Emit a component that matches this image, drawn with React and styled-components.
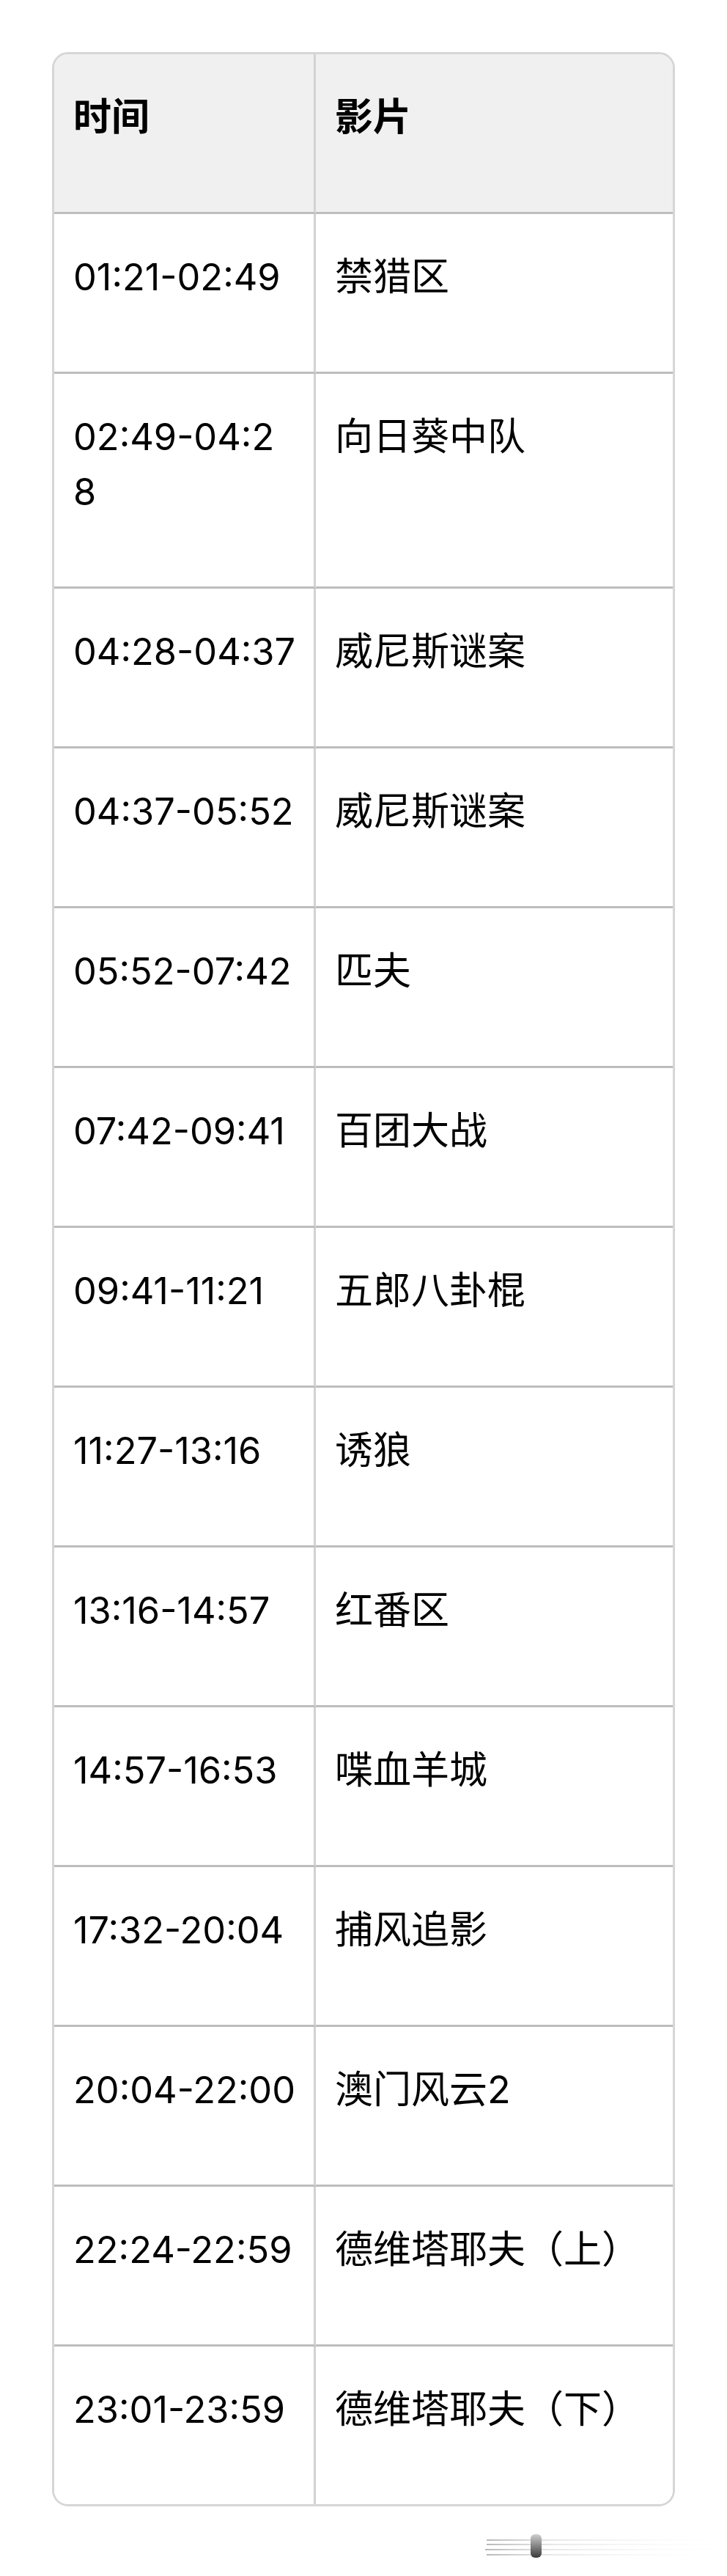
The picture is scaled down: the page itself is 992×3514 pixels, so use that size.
import React from 'react'
import styled, { createGlobalStyle } from 'styled-components'

const GlobalStyle = createGlobalStyle`
    html, body {
        margin: 0;
        padding: 0;
        background: #ffffff;
    }
    body {
        font-family: Inter, "Noto Sans CJK SC", sans-serif;
        color: #000;
    }
`

const Page = styled.div`
    min-height: 3514px;
    padding: 71px 0 0 71px;
    box-sizing: border-box;
`

const Table = styled.div`
    width: 850px;
    box-sizing: border-box;
    display: grid;
    grid-template-columns: 357px 1fr;
    border: 3px solid #d6d6d6;
    border-radius: 22px;
    overflow: hidden;
`

const Cell = styled.div`
    box-sizing: border-box;
    padding: 48px 20px 92px 26px;
    font-size: ${props => props.$first && !props.$head ? '50.5px' : '52px'};
    line-height: 75px;
    font-weight: ${props => props.$head ? 700 : 400};
    background: ${props => props.$head ? '#f0f0f0' : '#fff'};
    border-right: ${props => props.$first ? '3px solid #d2d2d2' : 'none'};
    border-bottom: ${props => props.$last ? 'none' : '3px solid #bdbdbd'};
    white-space: nowrap;
`

const Footer = styled.div`
    display: flex;
    justify-content: flex-end;
    padding: 36px 0 0 0;
`

const ScrollMark = styled.svg`
    width: 332px;
    height: 40px;
`

const rows = [
    ['01:21-02:49', '禁猎区'],
    [['02:49-04:2', '8'], '向日葵中队'],
    ['04:28-04:37', '威尼斯谜案'],
    ['04:37-05:52', '威尼斯谜案'],
    ['05:52-07:42', '匹夫'],
    ['07:42-09:41', '百团大战'],
    ['09:41-11:21', '五郎八卦棍'],
    ['11:27-13:16', '诱狼'],
    ['13:16-14:57', '红番区'],
    ['14:57-16:53', '喋血羊城'],
    ['17:32-20:04', '捕风追影'],
    ['20:04-22:00', '澳门风云2'],
    ['22:24-22:59', '德维塔耶夫（上）'],
    ['23:01-23:59', '德维塔耶夫（下）'],
]

function TimeText({ value }) {
    if (Array.isArray(value)) {
        return <>{value[0]}<br />{value[1]}</>
    }
    return value
}

export default function App() {
    return (
        <Page>
            <GlobalStyle />
            <Table>
                <Cell $head $first>时间</Cell>
                <Cell $head>影片</Cell>
                {rows.map((r, i) => {
                    const last = i === rows.length - 1
                    return (
                        <React.Fragment key={i}>
                            <Cell $first $last={last}><TimeText value={r[0]} /></Cell>
                            <Cell $last={last}>{r[1]}</Cell>
                        </React.Fragment>
                    )
                })}
            </Table>
            <Footer>
                <ScrollMark viewBox="0 0 332 40">
                    <defs>
                        <linearGradient id="fade" x1="0" x2="1" y1="0" y2="0">
                            <stop offset="0" stopColor="#9a9a9a" stopOpacity="0.7" />
                            <stop offset="0.3" stopColor="#c8c8c8" stopOpacity="0.4" />
                            <stop offset="1" stopColor="#eeeeee" stopOpacity="0" />
                        </linearGradient>
                        <linearGradient id="bar" x1="0" x2="0" y1="0" y2="1">
                            <stop offset="0" stopColor="#cfcfcf" />
                            <stop offset="1" stopColor="#3a3a3a" />
                        </linearGradient>
                    </defs>
                    <rect x="4" y="9" width="320" height="2" fill="url(#fade)" />
                    <rect x="4" y="15" width="320" height="2" fill="url(#fade)" />
                    <rect x="2" y="22" width="320" height="2" fill="url(#fade)" />
                    <rect x="4" y="29" width="300" height="2" fill="url(#fade)" />
                    <rect x="64" y="2" width="15" height="32" rx="6" fill="url(#bar)" />
                </ScrollMark>
            </Footer>
        </Page>
    )
}
